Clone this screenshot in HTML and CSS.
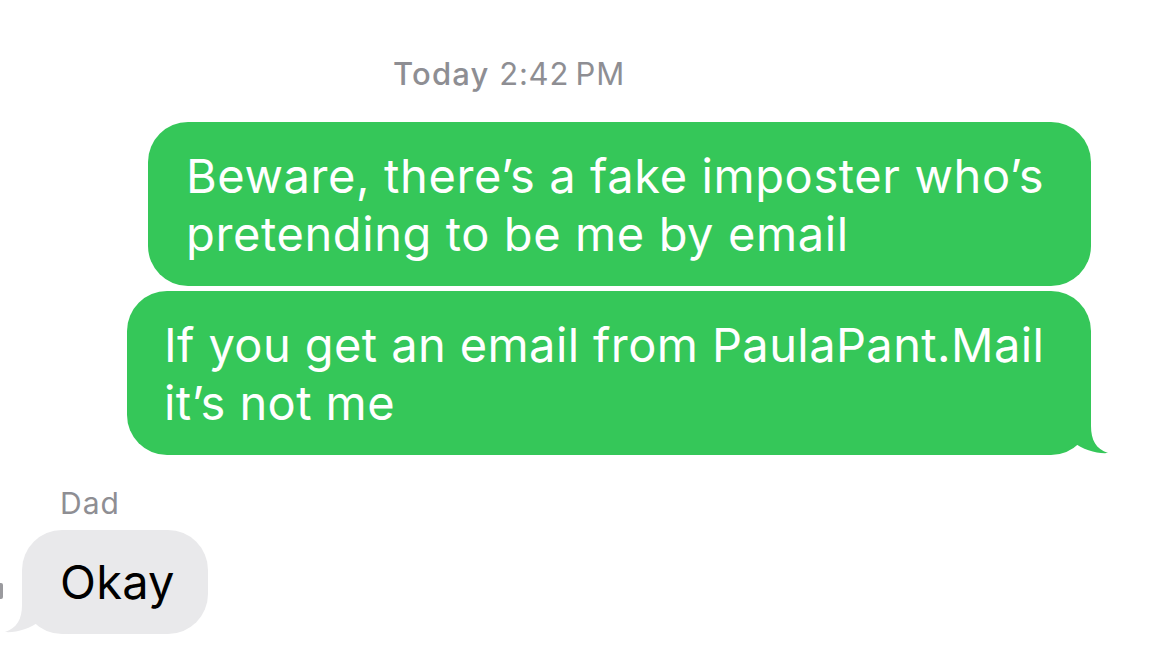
FILE: index.html
```html
<!DOCTYPE html>
<html lang="en">
<head>
<meta charset="utf-8">
<title>Messages</title>
<link rel="stylesheet" href="styles.css">
</head>
<body>
<main class="thread">
  <div class="timestamp"><span class="day">Today</span> 2:42&#8201;PM</div>

  <div class="group sent">
    <div class="bubble sent-bubble b1"><span class="text">Beware, there’s a fake imposter who’s<br>pretending to be me by email</span></div>
    <div class="bubble sent-bubble b2">
      <svg class="tail tail-right" width="72" height="52" viewBox="0 0 72 52" aria-hidden="true">
        <path d="M51 0 L51 22 C51 36 56 45 68 49 C58 50 43 46 33 38 C27 45 18 51 0 51 L0 0 Z" fill="#35c759"/>
      </svg>
      <span class="text">If you get an email from PaulaPant.Mail<br>it’s not me</span>
    </div>
  </div>

  <div class="sender">Dad</div>
  <div class="group received">
    <span class="edge-mark"></span>
    <div class="bubble recv-bubble">
      <svg class="tail tail-left" width="72" height="52" viewBox="0 0 72 52" aria-hidden="true">
        <path d="M21 0 L21 22 C21 36 16 45 4 49 C14 50 29 46 39 38 C45 45 54 51 72 51 L72 0 Z" fill="#e9e9eb"/>
      </svg>
      <span class="text">Okay</span>
    </div>
  </div>
</main>
</body>
</html>
```

FILE: styles.css
```css
html, body {
  margin: 0;
  padding: 0;
  background: #ffffff;
}

body {
  font-family: Inter, "Noto Sans", "Liberation Sans", sans-serif;
  width: 1153px;
  height: 668px;
  overflow: hidden;
}

.thread {
  display: flex;
  flex-direction: column;
  padding-top: 56px;
}

.timestamp {
  padding-left: 393px;
  font-size: 31px;
  line-height: 36px;
  color: #8e8e93;
  letter-spacing: 0.8px;
}

.timestamp .day {
  font-weight: 500;
  letter-spacing: 1.2px;
}

.group {
  display: flex;
  flex-direction: column;
  gap: 5px;
}

.group.sent {
  margin-top: 30px;
  align-items: flex-end;
  padding-right: 62px;
}

.bubble {
  position: relative;
  box-sizing: border-box;
  font-size: 47px;
  line-height: 58px;
  border-radius: 40px;
  letter-spacing: 0.6px;
}

.bubble .text {
  position: relative;
  z-index: 1;
}

.sent-bubble {
  background: #35c759;
  color: #ffffff;
  padding: 25px 10px 23px 38px;
}

.b1 { width: 943px; }
.b2 { width: 964px; padding-left: 37px; letter-spacing: 0.4px; }

.tail {
  position: absolute;
  bottom: -1px;
  z-index: 0;
}

.tail-right {
  right: -21px;
}

.tail-left {
  left: -21px;
}

.sender {
  margin-top: 31px;
  padding-left: 60px;
  font-size: 30px;
  line-height: 34px;
  color: #8e8e93;
  letter-spacing: 1px;
}

.group.received {
  margin-top: 10px;
  flex-direction: row;
  align-items: center;
  position: relative;
  padding-left: 22px;
}

.recv-bubble {
  background: #e9e9eb;
  color: #000000;
  width: 186px;
  padding: 23px 10px 23px 38px;
  letter-spacing: 0.2px;
}

.edge-mark {
  position: absolute;
  left: 0;
  top: 53px;
  width: 3px;
  height: 16px;
  border-radius: 0 2px 2px 0;
  background: #9a9a9e;
}
```
